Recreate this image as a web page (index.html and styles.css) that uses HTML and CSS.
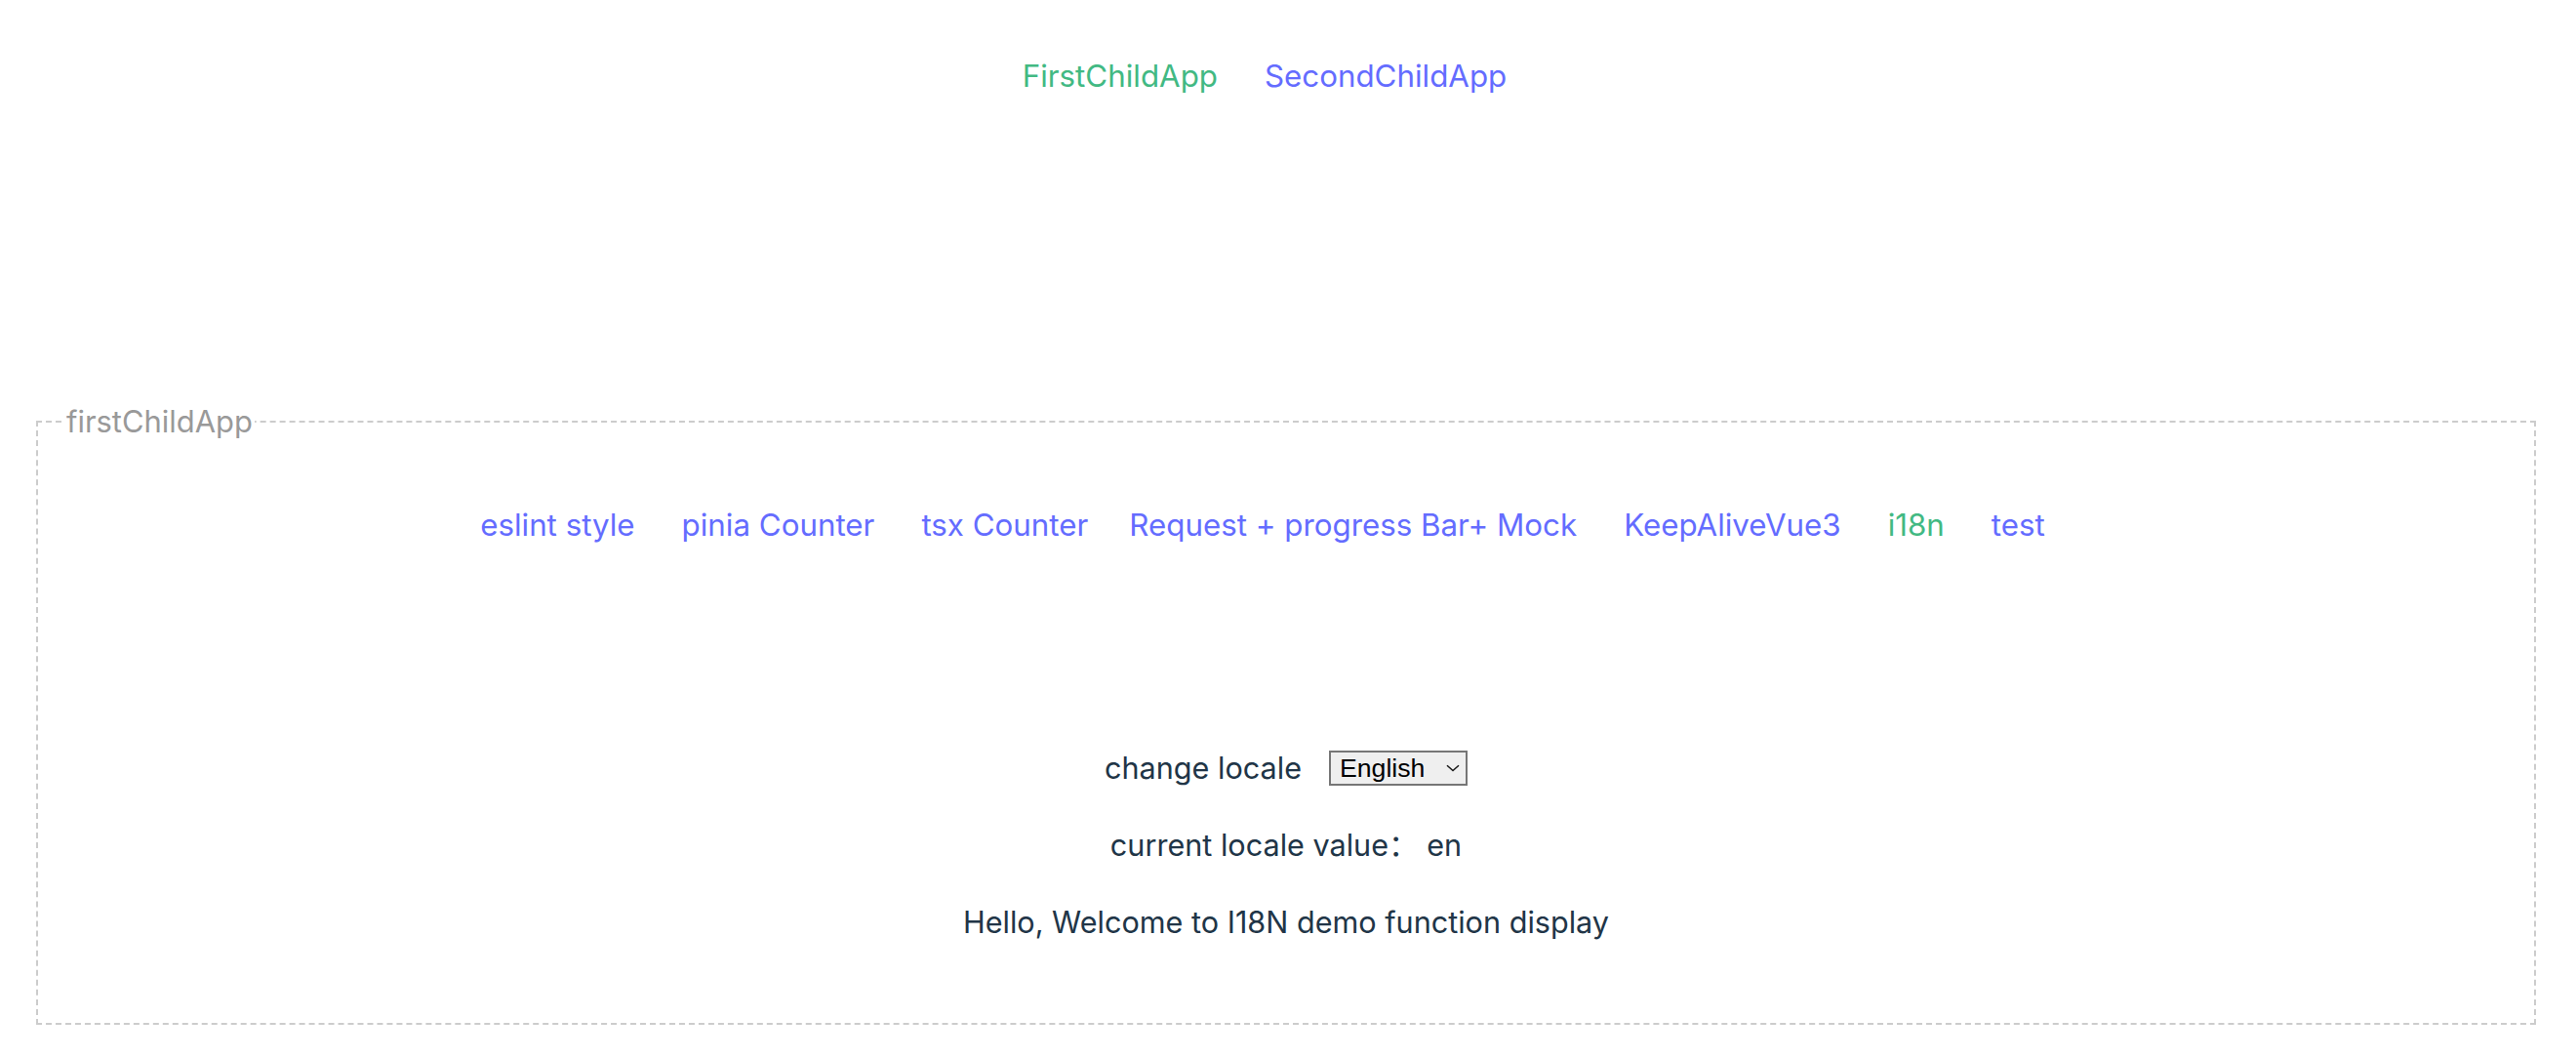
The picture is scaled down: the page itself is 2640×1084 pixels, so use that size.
FILE: index.html
```html
<!DOCTYPE html>
<html lang="en">
<head>
<meta charset="utf-8">
<title>Micro App Demo</title>
<link rel="stylesheet" href="styles.css">
</head>
<body>
  <nav class="main-nav">
    <a class="nav-link active" href="#">FirstChildApp</a>
    <a class="nav-link" href="#">SecondChildApp</a>
  </nav>

  <fieldset class="child-app">
    <legend class="child-legend">firstChildApp</legend>

    <nav class="sub-nav">
      <a class="nav-link" href="#">eslint style</a>
      <a class="nav-link" href="#">pinia Counter</a>
      <a class="nav-link nav-link-tight" href="#">tsx Counter</a>
      <a class="nav-link" href="#">Request + progress Bar+ Mock</a>
      <a class="nav-link" href="#">KeepAliveVue3</a>
      <a class="nav-link active" href="#">i18n</a>
      <a class="nav-link" href="#">test</a>
    </nav>

    <section class="i18n-demo">
      <div class="locale-row">
        <span class="locale-label">change locale</span>
        <span class="select-wrap">
          <select class="locale-select">
            <option value="en" selected>English</option>
            <option value="zh">中文</option>
          </select>
          <svg class="select-chevron" width="14" height="8" viewBox="0 0 14 8" aria-hidden="true">
            <path d="M1 1.2 L7 6.6 L13 1.2" fill="none" stroke="#1a1a1a" stroke-width="1.5"/>
          </svg>
        </span>
      </div>
      <p class="demo-line">current locale value： en</p>
      <p class="demo-line">Hello, Welcome to I18N demo function display</p>
    </section>
  </fieldset>
</body>
</html>
```

FILE: styles.css
```css
html, body {
  background: #ffffff;
}

body {
  margin: 0;
  font-family: Inter, "Noto Sans CJK SC", "Liberation Sans", sans-serif;
  font-size: 30.6px;
  line-height: 48px;
  color: #213547;
}

.nav-link {
  color: #646cff;
  text-decoration: none;
  font-size: 31.3px;
  margin-right: 48px;
}

.nav-link-tight {
  margin-right: 42px;
}

.nav-link.active {
  color: #42b983;
}

.main-nav {
  display: flex;
  justify-content: center;
  padding-top: 54px;
  height: 48px;
}

.child-app {
  margin: 306px 41px 0 37px;
  padding: 0 0 79px 0;
  border: 2px dashed #cccccc;
  min-width: 0;
}

.child-legend {
  margin-left: 27px;
  padding: 0 2px;
  font-size: 30.9px;
  line-height: 48px;
  color: #999999;
}

.sub-nav {
  display: flex;
  justify-content: center;
  margin-top: 58px;
  height: 48px;
}

.i18n-demo {
  display: flex;
  flex-direction: column;
  align-items: center;
  gap: 31px;
  margin-top: 201px;
}

.locale-row {
  display: flex;
  align-items: center;
  gap: 28px;
  height: 48px;
}

.select-wrap {
  position: relative;
  display: inline-flex;
}

.locale-select {
  appearance: none;
  -webkit-appearance: none;
  width: 142px;
  height: 36px;
  margin: 0;
  padding: 0 0 0 9px;
  border: 2px solid #767676;
  border-radius: 0;
  background: #efefef;
  color: #000000;
  font-family: "Liberation Sans", Arial, sans-serif;
  font-size: 26.67px;
  line-height: 32px;
}

.select-chevron {
  position: absolute;
  right: 8px;
  top: 14px;
  pointer-events: none;
}

.demo-line {
  margin: 0;
}
```
